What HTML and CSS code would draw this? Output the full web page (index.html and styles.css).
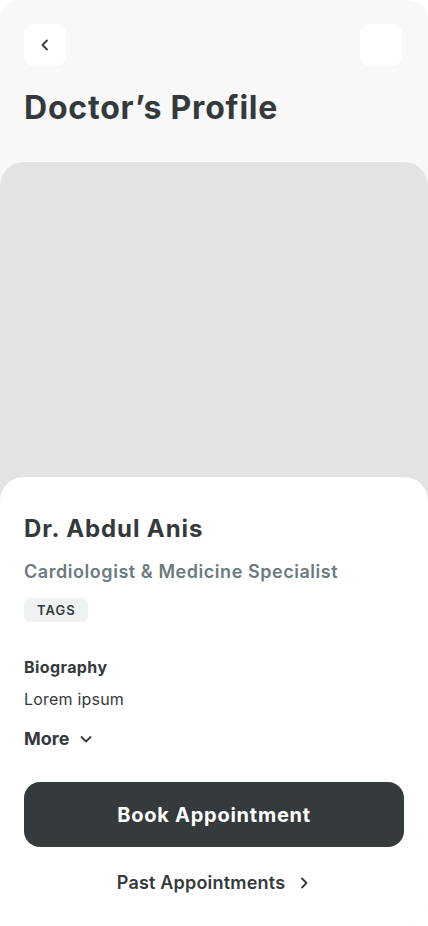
FILE: index.html
```html
<!DOCTYPE html>
<html lang="en">
<head>
<meta charset="utf-8">
<title>Doctor's Profile</title>
<link rel="stylesheet" href="styles.css">
</head>
<body>
<div class="screen">
  <header class="topbar">
    <button class="icon-btn" aria-label="Back">
      <svg width="14" height="14" viewBox="0 0 14 14" fill="none"><path d="M9 2.5L4.5 7L9 11.5" stroke="#343a3c" stroke-width="1.8" stroke-linecap="round" stroke-linejoin="round"/></svg>
    </button>
    <button class="icon-btn" aria-label="Menu"></button>
  </header>
  <h1 class="page-title">Doctor’s Profile</h1>
  <div class="photo"></div>
  <section class="sheet">
    <h2 class="name">Dr. Abdul Anis</h2>
    <p class="specialty">Cardiologist &amp; Medicine Specialist</p>
    <div class="tags"><span class="tag">TAGS</span></div>
    <h3 class="bio-title">Biography</h3>
    <p class="bio-text">Lorem ipsum</p>
    <button class="more">More
      <svg width="14" height="14" viewBox="0 0 14 14" fill="none"><path d="M2.5 5L7 9.5L11.5 5" stroke="#343a3c" stroke-width="1.8" stroke-linecap="round" stroke-linejoin="round"/></svg>
    </button>
    <button class="book">Book Appointment</button>
    <a class="past" href="#">Past Appointments
      <svg width="14" height="14" viewBox="0 0 14 14" fill="none"><path d="M5 2.5L9.5 7L5 11.5" stroke="#343a3c" stroke-width="1.8" stroke-linecap="round" stroke-linejoin="round"/></svg>
    </a>
  </section>
</div>
</body>
</html>
```
FILE: styles.css
```css
* { box-sizing: border-box; }
html, body { margin: 0; padding: 0; background: #ffffff; }
body {
  font-family: "Inter", "Lato", sans-serif;
  color: #343a3c;
}
.screen {
  width: 428px;
  height: 926px;
  background: #f8f8f8;
  border-radius: 20px;
  overflow: hidden;
  display: flex;
  flex-direction: column;
}
.topbar {
  display: flex;
  justify-content: space-between;
  padding: 24px 26px 0 24px;
}
.icon-btn {
  width: 42px;
  height: 42px;
  border: none;
  border-radius: 10px;
  background: #ffffff;
  display: flex;
  align-items: center;
  justify-content: center;
  padding: 0;
}
.page-title {
  margin: 22px 0 0 24px;
  font-size: 32px;
  line-height: 40px;
  font-weight: 700;
  color: #343a3c;
  letter-spacing: 0.8px;
}
.photo {
  margin-top: 34px;
  height: 340px;
  background: #e3e3e3;
  border-radius: 24px 24px 0 0;
  flex: none;
}
.sheet {
  margin-top: -25px;
  flex: 1;
  background: #ffffff;
  border-radius: 24px 24px 0 0;
  padding: 36px 24px 0 24px;
  display: flex;
  flex-direction: column;
  align-items: flex-start;
}
.name {
  margin: 0;
  font-size: 24px;
  line-height: 32px;
  font-weight: 700;
  color: #343a3c;
  letter-spacing: 0.9px;
}
.specialty {
  margin: 15px 0 0 0;
  font-size: 18px;
  line-height: 24px;
  font-weight: 600;
  color: #6b7a7e;
  letter-spacing: 0.55px;
}
.tags { margin-top: 14px; display: flex; }
.tag {
  background: #eef2f2;
  border-radius: 6px;
  padding: 0 12px 0 13px;
  height: 24px;
  line-height: 24px;
  font-size: 13px;
  font-weight: 600;
  letter-spacing: 1px;
  color: #343a3c;
}
.bio-title {
  margin: 34px 0 0 0;
  font-size: 16px;
  line-height: 22px;
  font-weight: 700;
  letter-spacing: 0.4px;
}
.bio-text {
  margin: 10px 0 0 0;
  font-size: 16px;
  line-height: 22px;
  font-weight: 400;
  letter-spacing: 0.2px;
}
.more {
  margin-top: 17px;
  border: none;
  background: none;
  padding: 0;
  font-family: inherit;
  font-size: 18px;
  line-height: 24px;
  font-weight: 700;
  color: #343a3c;
  display: flex;
  align-items: center;
  gap: 10px;
}
.book {
  margin-top: 31px;
  width: 380px;
  height: 65px;
  border: none;
  border-radius: 16px;
  background: #353b3d;
  color: #ffffff;
  font-family: inherit;
  font-size: 20px;
  font-weight: 700;
  letter-spacing: 0.75px;
}
.past {
  align-self: center;
  margin-top: 24px;
  text-decoration: none;
  font-size: 18px;
  line-height: 24px;
  font-weight: 600;
  color: #343a3c;
  display: flex;
  align-items: center;
  gap: 12px;
  letter-spacing: 0.2px;
}
```
